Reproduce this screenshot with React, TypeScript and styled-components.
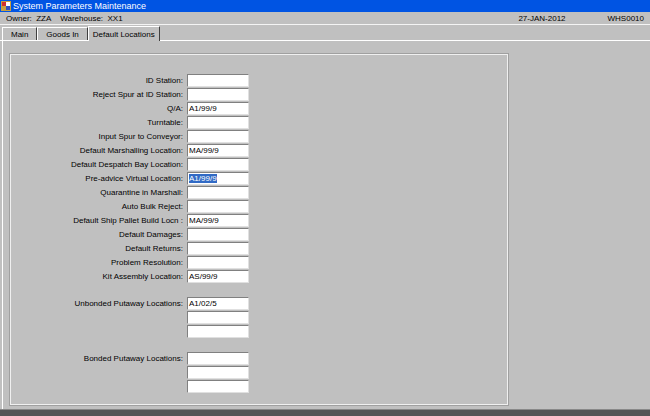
import styled, { createGlobalStyle } from "styled-components";

const Global = createGlobalStyle`
  html, body { margin: 0; padding: 0; background: #c0c0c0; overflow: hidden; }
  * { box-sizing: border-box; }
`;

const fields: { label: string; value?: string; selected?: boolean }[] = [
  { label: "ID Station:" },
  { label: "Reject Spur at ID Station:" },
  { label: "Q/A:", value: "A1/99/9" },
  { label: "Turntable:" },
  { label: "Input Spur to Conveyor:" },
  { label: "Default Marshalling Location:", value: "MA/99/9" },
  { label: "Default Despatch Bay Location:" },
  { label: "Pre-advice Virtual Location:", value: "A1/99/9", selected: true },
  { label: "Quarantine in Marshall:" },
  { label: "Auto Bulk Reject:" },
  { label: "Default Ship Pallet Build Locn :", value: "MA/99/9" },
  { label: "Default Damages:" },
  { label: "Default Returns:" },
  { label: "Problem Resolution:" },
  { label: "Kit Assembly Location:", value: "AS/99/9" },
];

const Window = styled.div`
  width: 650px;
  height: 416px;
  display: flex;
  flex-direction: column;
  font-family: "Liberation Sans", Arial, sans-serif;
  font-size: 8px;
  color: #000;
  background: #c0c0c0;
`;

const TitleBar = styled.div`
  height: 12px;
  background: #0054e3;
  color: #fff;
  font-size: 9px;
  display: flex;
  align-items: center;
  gap: 2px;
  padding-left: 1px;
`;

const InfoRow = styled.div`
  height: 14px;
  display: flex;
  align-items: center;
  padding: 0 6px;
  border-bottom: 1px solid #f4f4f4;
`;

const Spacer = styled.div`
  flex: 1;
`;

const TabRow = styled.div`
  height: 16px;
  display: flex;
  align-items: flex-end;
  padding-left: 2px;
  border-bottom: 1px solid #fff;
`;

const Tab = styled.div<{ $active?: boolean }>`
  height: ${(p) => (p.$active ? 15 : 13)}px;
  padding: 0 ${(p) => (p.$active ? 4 : 8)}px;
  display: flex;
  align-items: center;
  border-top: 1px solid #fff;
  border-left: 1px solid #fff;
  border-right: 1px solid #404040;
  margin-bottom: ${(p) => (p.$active ? -1 : 0)}px;
  background: #c0c0c0;
`;

const Panel = styled.div`
  flex: 1;
  margin-left: 2px;
  border-left: 1px solid #fff;
  padding: 13px 0 4px 7px;
  display: flex;
`;

const Group = styled.div`
  width: 498px;
  height: 351px;
  border: 1px solid #f0f0f0;
  outline: 1px solid #a0a0a0;
  padding-top: 19px;
`;

const Form = styled.div`
  display: grid;
  grid-template-columns: 172px 62px;
  column-gap: 4px;
  row-gap: 1px;
  align-items: center;
`;

const Label = styled.div`
  text-align: right;
  white-space: nowrap;
`;

const Input = styled.div<{ $selected?: boolean }>`
  height: 13px;
  background: #fff;
  border-top: 1px solid #808080;
  border-left: 1px solid #808080;
  border-right: 1px solid #e0e0e0;
  border-bottom: 1px solid #e0e0e0;
  padding-left: 1px;
  line-height: 11px;
  span {
    background: ${(p) => (p.$selected ? "#316ac5" : "transparent")};
    color: ${(p) => (p.$selected ? "#fff" : "#000")};
  }
`;

const Gap = styled.div<{ $h: number }>`
  grid-column: 1 / 3;
  height: ${(p) => p.$h}px;
`;

const BottomBar = styled.div`
  height: 7px;
  background: #555;
  border-top: 1px solid #888;
`;

const Icon = () => (
  <svg width="10" height="10" viewBox="0 0 10 10">
    <rect x="0" y="0" width="10" height="10" fill="#c8a040" />
    <rect x="1" y="1" width="4" height="4" fill="#d03030" />
    <rect x="5" y="5" width="4" height="4" fill="#3050c0" />
    <rect x="5" y="1" width="4" height="4" fill="#fff" />
  </svg>
);

const Multi = ({ label, values }: { label: string; values: string[] }) => (
  <>
    {values.map((v, i) => (
      <>
        <Label key={"l" + i}>{i === 0 ? label : ""}</Label>
        <Input key={"i" + i}><span>{v}</span></Input>
      </>
    ))}
  </>
);

export default function App() {
  return (
    <Window>
      <Global />
      <TitleBar>
        <Icon />
        System Parameters Maintenance
      </TitleBar>
      <InfoRow>
        Owner:&nbsp; ZZA&nbsp;&nbsp;&nbsp; Warehouse:&nbsp; XX1
        <Spacer />
        27-JAN-2012
        <span style={{ width: 42 }} />
        WHS0010
      </InfoRow>
      <TabRow>
        <Tab>Main</Tab>
        <Tab>Goods In</Tab>
        <Tab $active>Default Locations</Tab>
      </TabRow>
      <Panel>
        <Group>
          <Form>
            {fields.map((f) => (
              <>
                <Label key={f.label}>{f.label}</Label>
                <Input key={f.label + "i"} $selected={f.selected}>
                  <span>{f.value ?? ""}</span>
                </Input>
              </>
            ))}
            <Gap $h={12} />
            <Multi label="Unbonded Putaway Locations:" values={["A1/02/5", "", ""]} />
            <Gap $h={12} />
            <Multi label="Bonded Putaway Locations:" values={["", "", ""]} />
          </Form>
        </Group>
      </Panel>
      <BottomBar />
    </Window>
  );
}
